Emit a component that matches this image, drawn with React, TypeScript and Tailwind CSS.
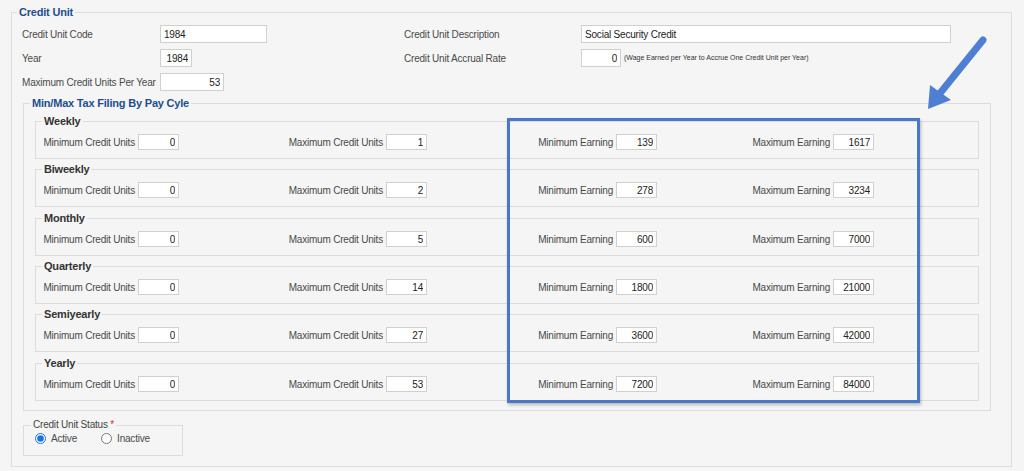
import React from 'react';

const cycles = [
  { name: 'Weekly', minCu: '0', maxCu: '1', minEarn: '139', maxEarn: '1617', gap: '' },
  { name: 'Biweekly', minCu: '0', maxCu: '2', minEarn: '278', maxEarn: '3234', gap: 'mt-[3px]' },
  { name: 'Monthly', minCu: '0', maxCu: '5', minEarn: '600', maxEarn: '7000', gap: 'mt-[4px]' },
  { name: 'Quarterly', minCu: '0', maxCu: '14', minEarn: '1800', maxEarn: '21000', gap: 'mt-[3px]' },
  { name: 'Semiyearly', minCu: '0', maxCu: '27', minEarn: '3600', maxEarn: '42000', gap: 'mt-[3px]' },
  { name: 'Yearly', minCu: '0', maxCu: '53', minEarn: '7200', maxEarn: '84000', gap: 'mt-[4px]' },
];

function Field({ value, className = '', right = false }: { value: string; className?: string; right?: boolean }) {
  return (
    <input
      readOnly
      defaultValue={value}
      className={`h-[18px] border border-[#d0d0d0] bg-white px-[3px] text-[10px] text-[#222] outline-none ${right ? 'text-right' : 'text-left'} ${className}`}
    />
  );
}

function SmallPair({ label, value }: { label: string; value: string }) {
  return (
    <div className="flex items-center justify-end gap-[3px]">
      <span className="whitespace-nowrap">{label}</span>
      <input
        readOnly
        defaultValue={value}
        className="h-[16px] w-[41px] border border-[#d0d0d0] bg-white px-[3px] text-right text-[10px] text-[#222] outline-none"
      />
    </div>
  );
}

export default function App() {
  return (
    <div className="relative h-[471px] w-[1024px] overflow-hidden bg-[#f5f5f5] pl-[11px] pt-[5px] font-['Liberation_Sans',Arial,sans-serif] text-[10px] tracking-[-0.2px] text-[#4a4a4a]">
      <fieldset className="w-[1001px] border border-[#dcdcdc] pb-[10px] pl-[5px]">
        <legend className="px-[2px] text-[11px] font-bold leading-[14px] text-[#1d4e8d]">Credit Unit</legend>
        <div className="pl-[5px] pt-[6px]">
          <div className="flex flex-col gap-[6px]">
            <div className="flex h-[18px] items-center">
              <div className="flex w-[382px] items-center">
                <span className="w-[138px]">Credit Unit Code</span>
                <Field value="1984" className="w-[107px]" />
              </div>
              <span className="w-[177px]">Credit Unit Description</span>
              <Field value="Social Security Credit" className="w-[370px]" />
            </div>
            <div className="flex h-[18px] items-center">
              <div className="flex w-[382px] items-center">
                <span className="w-[138px]">Year</span>
                <Field value="1984" right className="w-[32px]" />
              </div>
              <span className="w-[177px]">Credit Unit Accrual Rate</span>
              <Field value="0" right className="w-[40px]" />
              <span className="ml-[3px] text-[7px] tracking-normal text-[#333]">
                (Wage Earned per Year to Accrue One Credit Unit per Year)
              </span>
            </div>
            <div className="flex h-[18px] items-center">
              <span className="w-[138px]">Maximum Credit Units Per Year</span>
              <Field value="53" right className="w-[64px]" />
            </div>
          </div>

          <fieldset className="ml-[1px] mt-[5px] w-[968px] border border-[#dcdcdc] pb-[9px] pl-[6px]">
            <legend className="px-[2px] text-[11px] font-bold leading-[14px] text-[#1d4e8d]">
              Min/Max Tax Filing By Pay Cyle
            </legend>
            <div className="flex flex-col pl-[5px] pt-[4px]">
              {cycles.map((c) => (
                <fieldset key={c.name} className={`w-[944px] border border-[#dcdcdc] pb-[8px] pl-[6px] ${c.gap}`}>
                  <legend className="px-[2px] text-[11px] font-bold leading-[14px] text-[#333]">{c.name}</legend>
                  <div className="grid grid-cols-[134px_248px_230px_217px] pl-[3px] pt-[6px]">
                    <SmallPair label="Minimum Credit Units" value={c.minCu} />
                    <SmallPair label="Maximum Credit Units" value={c.maxCu} />
                    <SmallPair label="Minimum Earning" value={c.minEarn} />
                    <SmallPair label="Maximum Earning" value={c.maxEarn} />
                  </div>
                </fieldset>
              ))}
            </div>
          </fieldset>

          <fieldset className="ml-[1px] mt-[7px] w-[160px] border border-[#dcdcdc] pb-[11px] pl-[7px]">
            <legend className="px-[2px] leading-[14px] text-[#444]">
              Credit Unit Status <span className="text-[#e02424]">*</span>
            </legend>
            <div className="flex h-[12px] items-center pl-[4px]">
              <label className="flex items-center gap-[5px]">
                <input type="radio" name="status" defaultChecked className="m-0 h-[11px] w-[11px] accent-[#1a73e8]" />
                <span>Active</span>
              </label>
              <label className="ml-[24px] flex items-center gap-[5px]">
                <input type="radio" name="status" className="m-0 h-[11px] w-[11px]" />
                <span>Inactive</span>
              </label>
            </div>
          </fieldset>
        </div>
      </fieldset>

      <div className="pointer-events-none absolute left-[507px] top-[118px] h-[285px] w-[413px] border-[3px] border-[#4a78c9] shadow-[1px_2px_3px_rgba(0,0,0,0.25)]" />

      <svg className="pointer-events-none absolute left-[920px] top-[30px]" width="80" height="90" viewBox="0 0 80 90">
        <line x1="63" y1="10" x2="21" y2="62" stroke="#4f7fd2" strokeWidth="7" strokeLinecap="round" />
        <polygon points="8,79 10,55 31,70" fill="#4f7fd2" />
      </svg>
    </div>
  );
}
